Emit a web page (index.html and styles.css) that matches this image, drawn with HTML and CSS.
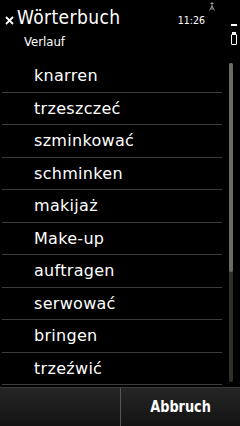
FILE: index.html
```html
<!DOCTYPE html>
<html lang="de">
<head>
    <meta charset="UTF-8">
    <title>Wörterbuch</title>
    <link rel="stylesheet" href="styles.css">
</head>
<body>
    <div class="screen">
        <div class="header">
            <div class="title-row">
                <svg class="close" width="9" height="9" viewBox="0 0 9 9">
                    <path d="M1 1 L8 8 M8 1 L1 8" stroke="#fff" stroke-width="1.8" fill="none"/>
                </svg>
                <span class="title">Wörterbuch</span>
                <span class="time">11:26</span>
            </div>
            <div class="subtitle">Verlauf</div>
            <svg class="antenna" width="6" height="10" viewBox="0 0 6 10">
                <path d="M3 1 L3 9 M0.5 9.5 L3 5 L5.5 9.5 M1.5 2.5 L4.5 2.5" stroke="#999" stroke-width="1" fill="none"/>
            </svg>
            <div class="status">
                <div class="signal"></div>
                <div class="battery"></div>
            </div>
        </div>
        <div class="main">
            <ul class="list">
                <li>knarren</li>
                <li>trzeszczeć</li>
                <li>szminkować</li>
                <li>schminken</li>
                <li>makijaż</li>
                <li>Make-up</li>
                <li>auftragen</li>
                <li>serwować</li>
                <li>bringen</li>
                <li>trzeźwić</li>
            </ul>
            <div class="scrollbar">
                <div class="thumb"></div>
            </div>
        </div>
        <div class="footer">
            <button class="btn"></button>
            <button class="btn"><span class="label">Abbruch</span></button>
        </div>
    </div>
</body>
</html>
```

FILE: styles.css
```css
html,body{
    margin:0px;
    padding:0px;
    background:#000;
}
.screen{
    width:240px;
    height:426px;
    display:flex;
    flex-direction:column;
    color:#fff;
    font-family:"DejaVu Sans", sans-serif;
}
.header{
    position:relative;
    height:60px;
}
.title-row{
    display:flex;
    align-items:center;
    padding:5px 0 0 5px;
    height:24px;
}
.close{
    margin:6px 3px 0 0;
}
.title{
    font-family:"DejaVu Sans Condensed", "DejaVu Sans", sans-serif;
    font-size:19px;
    letter-spacing:0.4px;
    flex:1;
}
.time{
    font-family:"DejaVu Sans Condensed", "DejaVu Sans", sans-serif;
    font-size:10.5px;
    margin:6px 35px 0 0;
}
.subtitle{
    font-family:"DejaVu Sans Condensed", "DejaVu Sans", sans-serif;
    font-size:13px;
    padding:5px 0 0 24px;
}
.antenna{
    position:absolute;
    top:1px;
    left:209px;
}
.status{
    position:absolute;
    top:24px;
    left:231px;
    display:flex;
    flex-direction:column;
    align-items:center;
    width:6px;
}
.signal{
    width:6px;
    height:2px;
    background:#fff;
}
.battery{
    position:relative;
    width:4px;
    height:9px;
    border:1px solid #fff;
    border-radius:1px;
    margin-top:8px;
}
.battery::before{
    content:"";
    position:absolute;
    top:-3px;
    left:0px;
    width:4px;
    height:2px;
    background:#fff;
}
.main{
    flex:1;
    display:flex;
}
.list{
    list-style:none;
    margin:0 0 0 2px;
    padding:0;
    width:220px;
}
.list li{
    height:32.5px;
    box-sizing:border-box;
    border-bottom:1px solid #3c3c3c;
    padding-left:32px;
    font-size:16px;
    line-height:31px;
    letter-spacing:0.3px;
}
.scrollbar{
    margin:3px 0 0 7px;
    width:4px;
    height:319px;
    border-radius:2px;
    background:#2e3128;
}
.thumb{
    height:209px;
    border-radius:2px;
    background:#6c6b60;
}
.footer{
    height:38px;
    display:flex;
    border-top:1px solid #3a3a3a;
}
.btn{
    flex:1;
    border:none;
    margin:0;
    background:linear-gradient(#252525, #131313);
    color:#fff;
    font-family:"DejaVu Sans", sans-serif;
    font-weight:bold;
    font-size:15.5px;
}
.btn + .btn{
    border-left:1px solid #555;
}
.label{
    display:inline-block;
    transform:scaleX(0.83);
}
```
